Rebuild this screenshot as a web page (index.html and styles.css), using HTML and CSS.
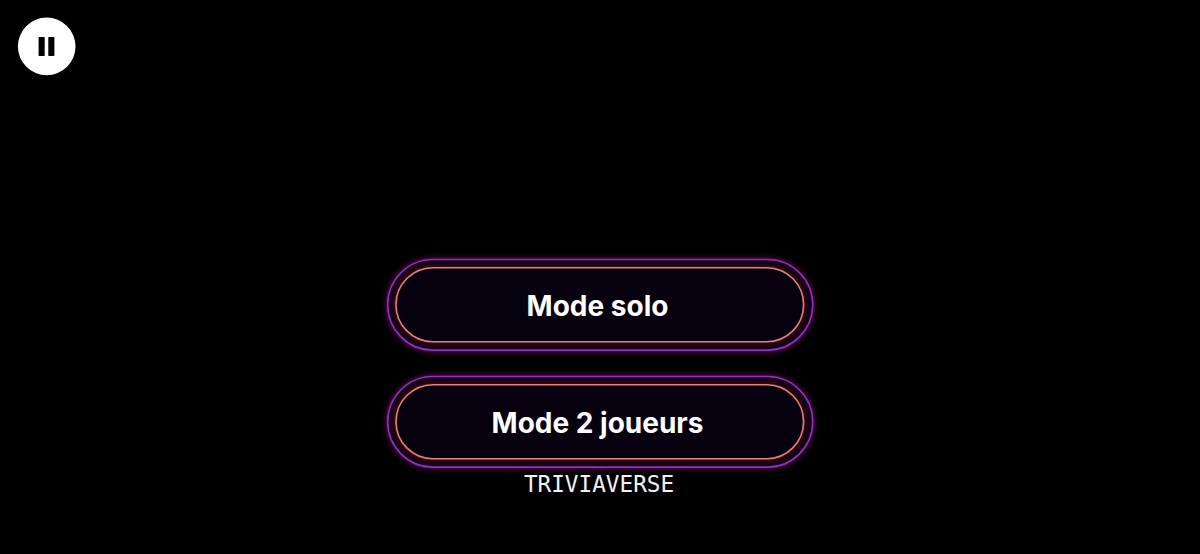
FILE: index.html
```html
<!DOCTYPE html>
<html lang="fr">
<head>
    <meta charset="UTF-8">
    <meta name="viewport" content="width=device-width, initial-scale=1.0">
    <title>Triviaverse</title>
    <link rel="stylesheet" href="styles.css">
</head>
<body>
    <button class="pause" type="button" aria-label="Pause">
        <svg width="58" height="58" viewBox="0 0 58 58">
            <circle cx="28.7" cy="29.4" r="28.8"/>
            <rect x="20.6" y="20.1" width="6.1" height="18.8" rx="0.7"/>
            <rect x="30.3" y="20.1" width="6.1" height="18.8" rx="0.7"/>
        </svg>
    </button>
    <main class="menu">
        <button class="mode" type="button">
            <svg class="frame" width="426" height="92" viewBox="0 0 426 92">
                <rect class="outer" x="0.7" y="0.5" width="425" height="90.6" rx="45.3"/>
                <rect class="inner" x="9" y="8.7" width="407.6" height="74" rx="37"/>
            </svg>
            <span class="label">Mode solo</span>
        </button>
        <button class="mode" type="button">
            <svg class="frame" width="426" height="92" viewBox="0 0 426 92">
                <rect class="outer" x="0.7" y="0.5" width="425" height="90.6" rx="45.3"/>
                <rect class="inner" x="9" y="8.7" width="407.6" height="74" rx="37"/>
            </svg>
            <span class="label">Mode 2 joueurs</span>
        </button>
        <p class="title">TRIVIAVERSE</p>
    </main>
</body>
</html>
```

FILE: styles.css
```css
* {
    box-sizing: border-box;
}
body {
    margin: 0;
    height: 554px;
    padding: 17px 18px;
    background: #000;
    color: #fff;
    overflow: hidden;
}
button {
    border: none;
    padding: 0;
    background: none;
    color: #fff;
    cursor: pointer;
}
.pause {
    display: block;
    width: 58px;
    height: 58px;
}
.pause svg {
    display: block;
    overflow: visible;
    fill: #000;
}
.pause circle {
    fill: #fff;
}
.menu {
    display: flex;
    flex-direction: column;
    align-items: center;
    margin-top: 184px;
}
.mode {
    display: grid;
    place-items: center;
    width: 426px;
    height: 92px;
    margin-bottom: 25px;
}
.frame, .label {
    grid-area: 1 / 1;
}
.frame {
    overflow: visible;
}
.outer {
    fill: #180014;
    stroke: #8a32c4;
    stroke-width: 1.6;
    filter: drop-shadow(0 0 3px #7a0a62);
}
.inner {
    fill: #07000f;
    stroke: #e58274;
    stroke-width: 1.6;
    filter: drop-shadow(0 0 2px #541420);
}
.label {
    z-index: 1;
    margin-right: 5px;
    padding-top: 1px;
    font: bold 28px/36px Inter, sans-serif;
    white-space: nowrap;
}
.title {
    margin: -23px 2px 0 0;
    font: 22.7px/28px "DejaVu Sans Mono", monospace;
    color: #f2f2f2;
}
```
